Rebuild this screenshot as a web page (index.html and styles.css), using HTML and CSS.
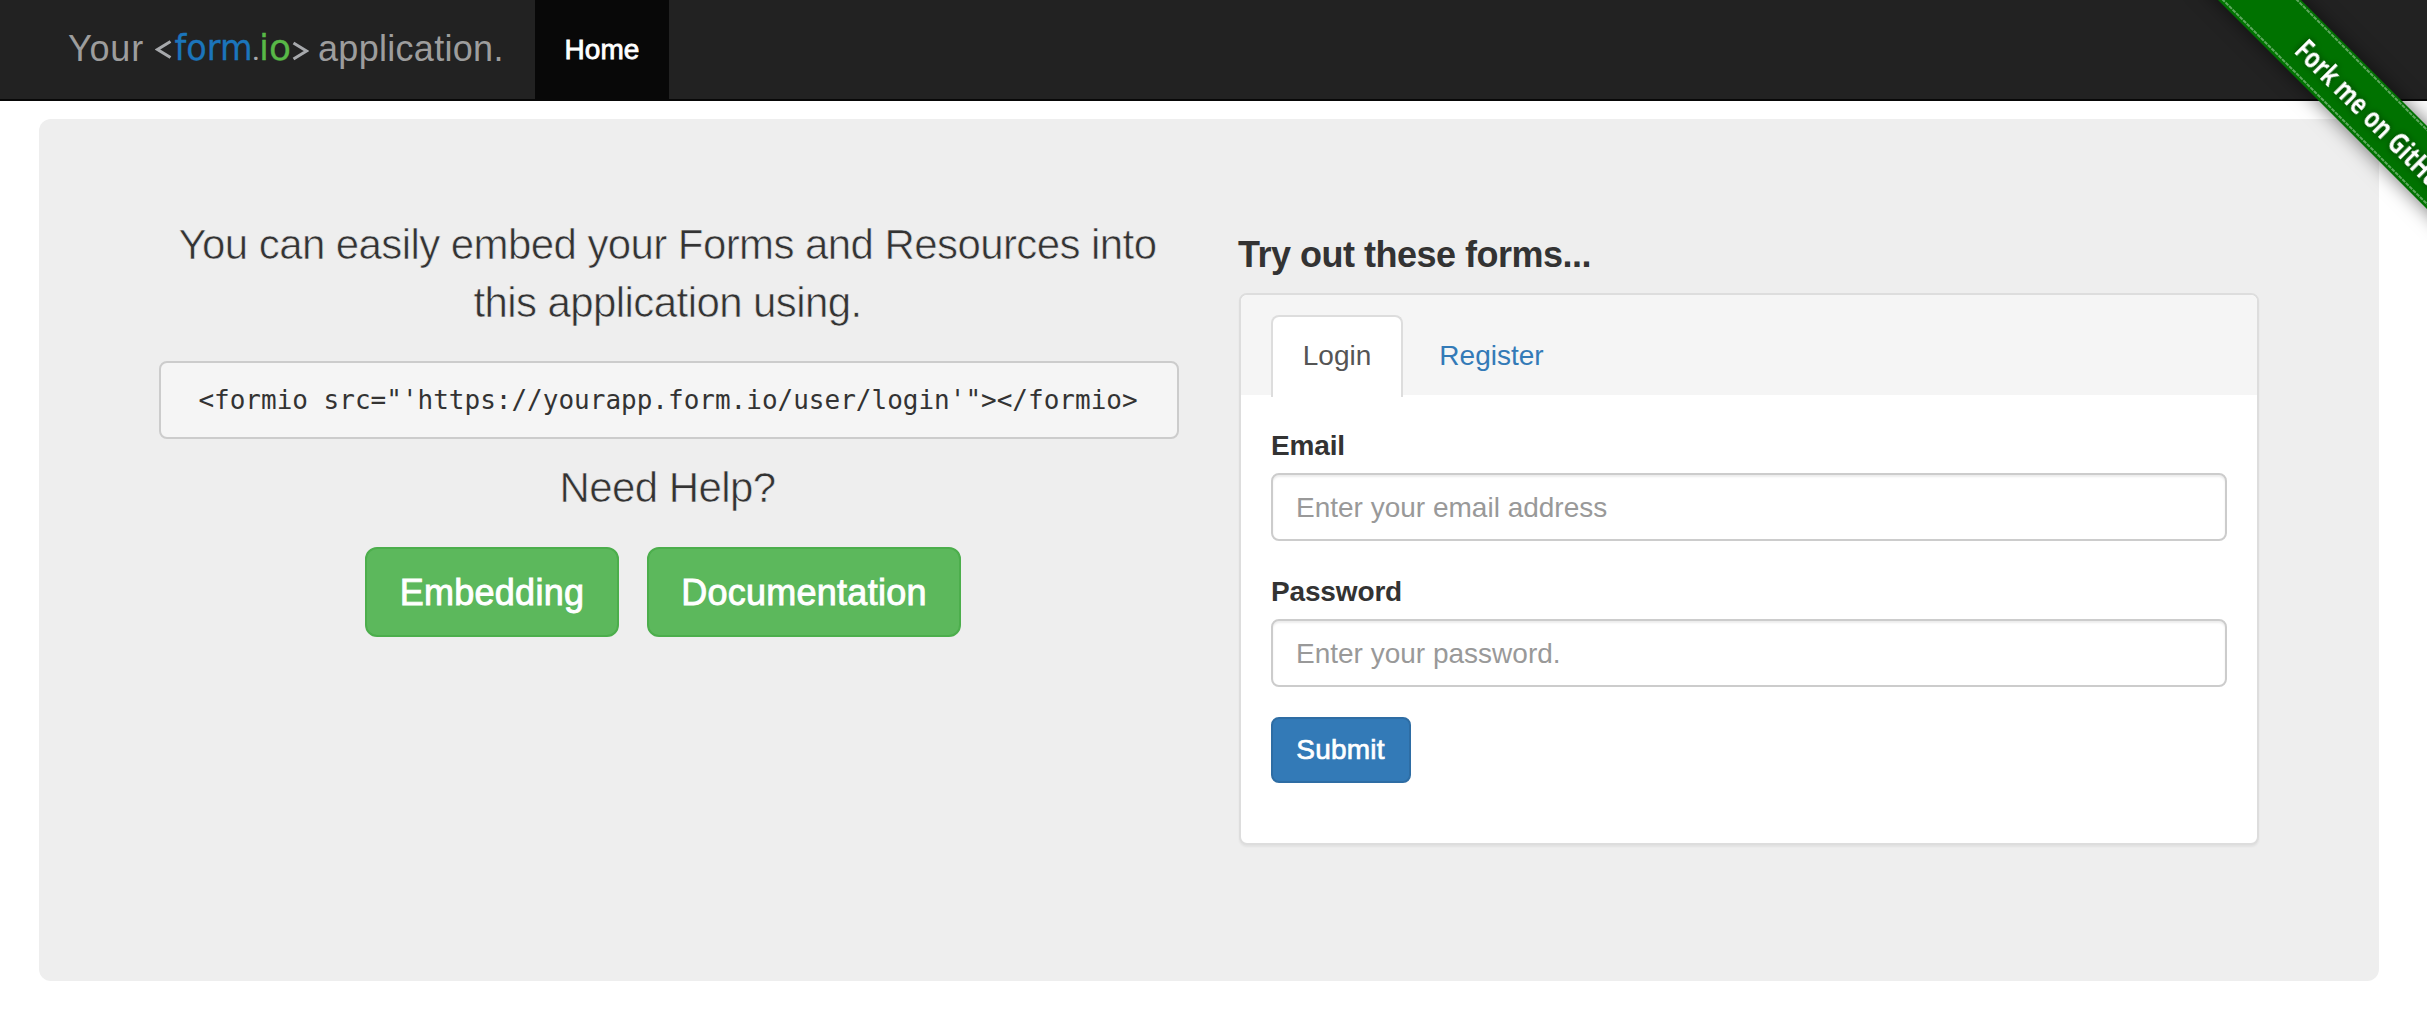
FILE: index.html
```html
<!DOCTYPE html>
<html lang="en">
<head>
<meta charset="utf-8">
<title>Your form.io application</title>
<link rel="stylesheet" href="styles.css">
</head>
<body>
<nav class="navbar">
  <a class="brand">
    <span class="brand-your">Your</span>
    <svg class="logo" width="154" height="97" viewBox="0 0 154 97">
      <path class="angle" d="M15.500 41.500 2.500 49.500l13 8M138.500 43l13 8-13 8"/>
      <text class="logo-form" x="19.500" y="60" textLength="78" lengthAdjust="spacingAndGlyphs">form</text>
      <text class="logo-dot" x="98" y="60">.</text>
      <text class="logo-io" x="104" y="60" textLength="32" lengthAdjust="spacingAndGlyphs">io</text>
    </svg>
    <span class="brand-app">application.</span>
  </a>
  <a class="nav-item">Home</a>
</nav>
<svg class="ribbon" width="247" height="240" viewBox="0 0 247 240">
  <g class="ribbon-shadow"><path class="ribbon-band" d="M18-20H101L271 150V233Z"/></g>
  <path class="ribbon-stitch" d="M42-1 251 208M116-1 251 134"/>
  <text class="ribbon-text" transform="translate(113 52) rotate(45)" textLength="209" lengthAdjust="spacingAndGlyphs">Fork me on GitHub</text>
</svg>
<main class="jumbotron">
  <section class="intro">
    <p class="lead">You can easily embed your Forms and Resources into<br>this application using.</p>
    <pre class="code">&lt;formio src="'https://yourapp.form.io/user/login'"&gt;&lt;/formio&gt;</pre>
    <p class="lead">Need Help?</p>
    <div class="actions">
      <a class="btn embedding">Embedding</a>
      <a class="btn documentation">Documentation</a>
    </div>
  </section>
  <section class="forms">
    <h3 class="title">Try out these forms...</h3>
    <div class="panel">
      <div class="tabs">
        <a class="tab active">Login</a>
        <a class="tab">Register</a>
      </div>
      <form class="panel-body">
        <label class="label">Email</label>
        <input class="input" type="text" placeholder="Enter your email address">
        <label class="label">Password</label>
        <input class="input" type="password" placeholder="Enter your password.">
        <button type="button" class="submit">Submit</button>
      </form>
    </div>
  </section>
</main>
</body>
</html>
```
FILE: styles.css
```css
* { box-sizing: border-box; }
body {
  margin: 0;
  height: 1031px;
  overflow: hidden;
  background: #fff;
  color: #333;
  font: 28px/40px "Liberation Sans", Arial, sans-serif;
}
.navbar {
  display: flex;
  height: 101px;
  padding-left: 68px;
  background: #222;
  border-bottom: 2px solid #080808;
}
.brand {
  display: flex;
  width: 467px;
  color: #9d9d9d;
  font-size: 36px;
  line-height: 98px;
  white-space: nowrap;
}
.brand-your { width: 87px; letter-spacing: .8px; }
.brand-app { margin-left: 9px; letter-spacing: .3px; }
.logo { flex: none; font: 36px "DejaVu Sans", sans-serif; }
.logo-form { fill: #1b75bb; stroke: #1b75bb; stroke-width: .3px; }
.logo-io { fill: #58b947; stroke: #58b947; stroke-width: .3px; }
.logo-dot { fill: #a7a9ac; font: bold 20px "Noto Sans", sans-serif; }
.angle { fill: none; stroke: #a7a9ac; stroke-width: 3; }
.nav-item {
  width: 134px;
  background: #080808;
  color: #fff;
  text-align: center;
  line-height: 99px;
  letter-spacing: .1px;
  -webkit-text-stroke: .8px #fff;
}
.ribbon { position: absolute; top: 0; right: 0; }
.ribbon-shadow { filter: drop-shadow(0 0 10px rgba(0, 0, 0, .55)); }
.ribbon-band { fill: #007200; }
.ribbon-stitch { fill: none; stroke: #5fa85f; stroke-width: 2; stroke-dasharray: 4 1; }
.ribbon-text {
  fill: #fff;
  font: bold 28px "Noto Sans", sans-serif;
  filter: drop-shadow(0 0 3px rgba(0, 0, 0, .5));
}
.jumbotron {
  display: flex;
  gap: 60px;
  margin: 18px 48px 0 39px;
  height: 862px;
  padding: 97px 120px;
  border-radius: 12px;
  background: #eee;
}
.intro, .forms { width: 1020px; }
.lead {
  margin: 0 3px 0 0;
  font-size: 42px;
  line-height: 58px;
  letter-spacing: -.58px;
  text-align: center;
  white-space: nowrap;
  -webkit-text-stroke: .6px #eee;
}
.code {
  margin: 29px 0 20px;
  height: 78px;
  border: 2px solid #ccc;
  border-radius: 8px;
  background: #f5f5f5;
  font: 26px/74px "DejaVu Sans Mono", monospace;
  text-align: center;
  text-indent: -2px;
}
.actions { display: flex; gap: 28px; padding: 30px 0 0 206px; }
.btn {
  height: 90px;
  border: 2px solid #4cae4c;
  border-radius: 12px;
  background: #5cb85c;
  color: #fff;
  font-size: 36px;
  line-height: 88px;
  text-align: center;
  letter-spacing: .25px;
  -webkit-text-stroke: .9px #fff;
}
.embedding { width: 254px; }
.documentation { width: 314px; }
.title {
  margin: 19px 0 19px -1px;
  font-size: 36px;
  line-height: 39px;
  letter-spacing: -.5px;
  white-space: nowrap;
}
.panel {
  height: 552px;
  border: 2px solid #ddd;
  border-radius: 8px;
  background: #fff;
  box-shadow: 0 2px 2px rgba(0, 0, 0, .05);
}
.tabs {
  display: flex;
  height: 100px;
  padding: 20px 30px 0;
  border-radius: 6px 6px 0 0;
  background: #f5f5f5;
}
.tab {
  height: 82px;
  width: 132px;
  padding-top: 19px;
  border: 2px solid transparent;
  border-bottom: 0;
  color: #337ab7;
  text-align: center;
}
.tab + .tab { width: 177px; }
.tab.active {
  border-color: #ddd;
  border-radius: 8px 8px 0 0;
  background: #fff;
  color: #555;
}
.panel-body { padding: 31px 30px 0; }
.label {
  display: block;
  height: 47px;
  font-weight: bold;
  letter-spacing: -.15px;
}
.input {
  display: block;
  width: 100%;
  height: 68px;
  margin: 0 0 31px;
  padding: 1px 24px 0 23px;
  border: 2px solid #ccc;
  border-radius: 8px;
  background: #fff;
  box-shadow: inset 0 2px 2px rgba(0, 0, 0, .075);
  font: 28px "Liberation Sans", Arial, sans-serif;
}
.input::placeholder { color: #999; }
.submit {
  display: block;
  margin-top: -1px;
  width: 140px;
  height: 66px;
  padding: 0 1px 0 0;
  border: 2px solid #2e6da4;
  border-radius: 8px;
  background: #337ab7;
  color: #fff;
  font: 28px/62px "Liberation Sans", Arial, sans-serif;
  letter-spacing: .2px;
  -webkit-text-stroke: .7px #fff;
}
```
